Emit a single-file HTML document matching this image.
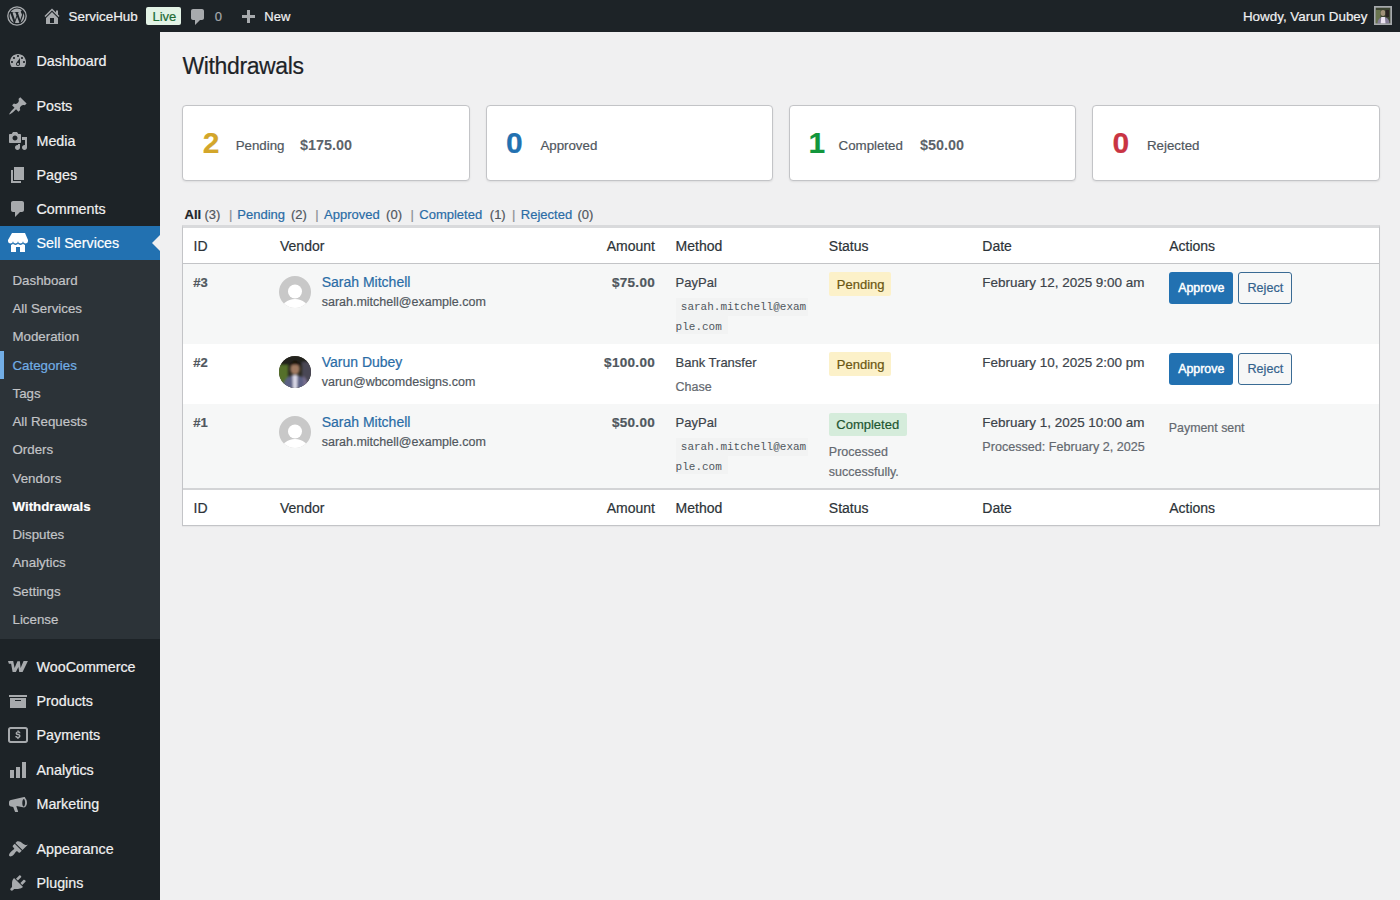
<!DOCTYPE html>
<html><head><meta charset="utf-8"><title>Withdrawals</title>
<style>
html,body{margin:0;padding:0;width:1400px;height:900px;overflow:hidden;background:#f0f0f1;font-family:"Liberation Sans", sans-serif;}
.t{position:absolute;white-space:pre;-webkit-text-stroke:0.2px currentColor;}
.r{position:absolute;box-sizing:border-box;}
svg{position:absolute;overflow:visible;}
</style></head><body>
<div class="r" style="left:0px;top:0px;width:1400px;height:32px;background:#1d2327;"></div><svg style="left:7px;top:6px;width:20px;height:20px" viewBox="0 0 20 20"><circle cx="10" cy="10" r="9.2" fill="none" stroke="#a7aaad" stroke-width="1.3"/><path fill="#a7aaad" d="M2.6 10c0 2.9 1.7 5.5 4.2 6.7L3.3 7C2.9 7.9 2.6 8.9 2.6 10zm12.5-.4c0-.9-.3-1.6-.6-2.1-.4-.6-.7-1.1-.7-1.7 0-.7.5-1.3 1.2-1.3h.1C13.8 3.4 12 2.6 10 2.6c-2.6 0-4.9 1.3-6.2 3.4h.5c.8 0 2-.1 2-.1.4 0 .4.6 0 .6 0 0-.4 0-.8.1l2.5 7.5 1.5-4.6-1.1-2.9c-.4 0-.7-.1-.7-.1-.4 0-.3-.6 0-.6 0 0 1.2.1 1.9.1.8 0 2-.1 2-.1.4 0 .4.6 0 .6 0 0-.4 0-.8.1l2.5 7.4.7-2.3c.3-1 .6-1.7.6-2.3zM10.1 10.7l-2.1 6.1c.6.2 1.3.3 2 .3.8 0 1.6-.1 2.4-.4l-.1-.1-2.2-5.9zm6.1-4c0 .1.1.5.1.8 0 .8-.1 1.6-.5 2.7l-2.2 6.4c2.2-1.3 3.7-3.7 3.7-6.4 0-1.3-.4-2.5-1.1-3.5z"/></svg><svg style="left:41.5px;top:5.5px;width:20px;height:20px" viewBox="0 0 20 20"><path fill="#a7aaad" d="M16 8.5l1.53 1.53-1.06 1.06L10 4.62l-6.47 6.47-1.06-1.06L10 2.5l4 4v-2h2v4zm-6-2.46l6 5.99V18H4v-5.97zM12 17v-5H8v5h4z" /></svg><div class="t" style="left:68.50px;top:9.800px;font-size:13.4px;line-height:13.4px;color:#f0f0f1;">ServiceHub</div><div class="r" style="left:146px;top:7px;width:35px;height:18px;background:#e3f3e6;border-radius:2px;"></div><div class="t" style="left:152.50px;top:10.000px;font-size:13px;line-height:13px;color:#1f6b35;">Live</div><svg style="left:188px;top:7px;width:20px;height:20px" viewBox="0 0 20 20"><path fill="#a7aaad" d="M5 2h9c1.1 0 2 .9 2 2v7c0 1.1-.9 2-2 2h-2l-5 5v-5H5c-1.1 0-2-.9-2-2V4c0-1.1.9-2 2-2z" /></svg><div class="t" style="left:214.80px;top:10.000px;font-size:13px;line-height:13px;color:#a7aaad;">0</div><div class="r" style="left:247px;top:10px;width:3px;height:13px;background:#a7aaad;"></div><div class="r" style="left:242px;top:15px;width:13px;height:3px;background:#a7aaad;"></div><div class="t" style="left:264.30px;top:10.000px;font-size:13px;line-height:13px;color:#f0f0f1;">New</div><div class="t" style="right:32.50px;top:9.800px;font-size:13.4px;line-height:13.4px;color:#f0f0f1;">Howdy, Varun Dubey</div><svg style="left:1374px;top:6px;width:18px;height:19px" viewBox="0 0 18 19"><defs><filter id="ab" x="-20%" y="-20%" width="140%" height="140%"><feGaussianBlur stdDeviation="0.6"/></filter></defs><rect width="18" height="19" fill="#9a9e9c"/><g filter="url(#ab)"><rect x="1.5" y="1.5" width="15" height="16" fill="#3e4433"/><rect x="1.5" y="4" width="5" height="13.5" fill="#6a7450"/><ellipse cx="9" cy="7" rx="2.4" ry="3" fill="#a09078"/><path d="M11.5 4h3.5v7h-3.5z" fill="#2a2420"/><path d="M3.5 17.5c0-4 2.5-6.5 6-6.5s6 2.5 6 6.5z" fill="#857e98"/><path d="M7.3 11h3.6l.6 6.5h-4.8z" fill="#ece4f2"/></g><rect x=".75" y=".75" width="16.5" height="17.5" fill="none" stroke="#a7aaad" stroke-width="1.5"/></svg><div class="r" style="left:0px;top:32px;width:160px;height:868px;background:#1d2327;"></div><div class="r" style="left:0px;top:260px;width:160px;height:379px;background:#2c3338;"></div><div class="r" style="left:0px;top:226px;width:160px;height:34px;background:#2271b1;"></div><svg style="left:152px;top:235px;width:8px;height:16px" viewBox="0 0 8 16"><path d="M8 0v16L0 8z" fill="#f0f0f1"/></svg><svg style="left:8px;top:51px;width:20px;height:20px" viewBox="0 0 20 20"><path fill="#a7aaad" d="M3.76 16h12.48c1.1-1.37 1.76-3.11 1.76-5 0-4.42-3.58-8-8-8s-8 3.58-8 8c0 1.89.66 3.63 1.76 5zM10 4c.55 0 1 .45 1 1s-.45 1-1 1-1-.45-1-1 .45-1 1-1zM6 6c.55 0 1 .45 1 1s-.45 1-1 1-1-.45-1-1 .45-1 1-1zm8 0c.55 0 1 .45 1 1s-.45 1-1 1-1-.45-1-1 .45-1 1-1zm-5.37 5.55L12 7v6c0 1.1-.9 2-2 2s-2-.9-2-2c0-.57.24-1.08.63-1.45zM4 10c.55 0 1 .45 1 1s-.45 1-1 1-1-.45-1-1 .45-1 1-1zm12 0c.55 0 1 .45 1 1s-.45 1-1 1-1-.45-1-1 .45-1 1-1zm-5 3c0-.55-.45-1-1-1s-1 .45-1 1 .45 1 1 1 1-.45 1-1z" /></svg><div class="t" style="left:36.50px;top:53.850px;font-size:14.3px;line-height:14.3px;color:#f0f0f1;">Dashboard</div><svg style="left:8px;top:96px;width:20px;height:20px" viewBox="0 0 20 20"><path fill="#a7aaad" d="M10.44 3.02l1.82-1.82 6.36 6.35-1.83 1.82c-1.05-.68-2.48-.57-3.41.36l-.75.75c-.92.93-1.04 2.35-.35 3.41l-1.83 1.82-2.41-2.41-2.8 2.79c-.42.42-3.38 2.71-3.8 2.29s1.86-3.39 2.28-3.81l2.79-2.79L4.1 9.36l1.83-1.82c1.05.69 2.48.57 3.4-.36l.75-.75c.93-.92 1.05-2.35.36-3.41z" /></svg><div class="t" style="left:36.50px;top:98.850px;font-size:14.3px;line-height:14.3px;color:#f0f0f1;">Posts</div><svg style="left:8px;top:131px;width:20px;height:20px" viewBox="0 0 20 20"><path fill="#a7aaad" d="M13 11V4c0-.55-.45-1-1-1h-1.67L9 1H5L3.67 3H2c-.55 0-1 .45-1 1v7c0 .55.45 1 1 1h10c.55 0 1-.45 1-1zM7 4.5c1.38 0 2.5 1.12 2.5 2.5S8.38 9.5 7 9.5 4.5 8.38 4.5 7 5.62 4.5 7 4.5zM14 6h5v10.5c0 1.38-1.12 2.5-2.5 2.5S14 17.880 14 16.5s1.12-2.5 2.5-2.5c.17 0 .34.02.5.05V9h-3V6zm-4 8.05V13h2v3.5c0 1.38-1.12 2.5-2.5 2.5S7 17.88 7 16.5 8.12 14 9.5 14c.17 0 .34.02.5.05z" /></svg><div class="t" style="left:36.50px;top:133.850px;font-size:14.3px;line-height:14.3px;color:#f0f0f1;">Media</div><svg style="left:8px;top:165px;width:20px;height:20px" viewBox="0 0 20 20"><path fill="#a7aaad" d="M6 15V2h10v13H6zm-1 1h8v2H3V5h2v11z" /></svg><div class="t" style="left:36.50px;top:167.850px;font-size:14.3px;line-height:14.3px;color:#f0f0f1;">Pages</div><svg style="left:8px;top:199px;width:20px;height:20px" viewBox="0 0 20 20"><path fill="#a7aaad" d="M5 2h9c1.1 0 2 .9 2 2v7c0 1.1-.9 2-2 2h-2l-5 5v-5H5c-1.1 0-2-.9-2-2V4c0-1.1.9-2 2-2z" /></svg><div class="t" style="left:36.50px;top:201.850px;font-size:14.3px;line-height:14.3px;color:#f0f0f1;">Comments</div><svg style="left:8px;top:233px;width:20px;height:20px" viewBox="0 0 20 20"><path fill="#fff" d="M1 10c.41.29.96.43 1.5.43.55 0 1.09-.14 1.5-.43.62-.46 1-1.17 1-2 0 .83.37 1.540 1 2 .41.29.96.43 1.5.43.55 0 1.09-.14 1.5-.43.62-.46 1-1.17 1-2 0 .83.37 1.54 1 2 .41.29.96.43 1.51.43.54 0 1.08-.14 1.49-.43.62-.46 1-1.17 1-2 0 .83.37 1.54 1 2 .41.29.96.43 1.5.43.55 0 1.09-.14 1.5-.43.63-.46 1-1.17 1-2V7l-3-7H4L0 7v1c0 .83.37 1.54 1 2zm2 8.99h5v-5h4v5h5v-7c-.37-.05-.72-.22-1-.43-.63-.45-1-.73-1-1.56 0 .83-.38 1.11-1 1.56-.41.3-.95.43-1.49.44-.55 0-1.1-.14-1.51-.44-.63-.45-1-.73-1-1.56 0 .83-.38 1.11-1 1.56-.41.3-.95.43-1.5.44-.54 0-1.09-.14-1.5-.44-.63-.45-1-.73-1-1.57 0 .84-.38 1.12-1 1.57-.29.21-.63.38-1 .44v6.99z" /></svg><div class="t" style="left:36.50px;top:235.850px;font-size:14.3px;line-height:14.3px;color:#fff;">Sell Services</div><svg style="left:8px;top:657px;width:20px;height:20px" viewBox="0 0 20 20"><path fill="#a7aaad" d="M0 4H5.2L6.6 11L9.4 4.3H11.9L12.6 11L15.6 4H19.9L14.6 15H11.2L10.4 10L7.9 15H4.6L3.1 6.8H0.9Z" /></svg><div class="t" style="left:36.50px;top:659.850px;font-size:14.3px;line-height:14.3px;color:#f0f0f1;">WooCommerce</div><svg style="left:8px;top:691px;width:20px;height:20px" viewBox="0 0 20 20"><path fill="#a7aaad" d="M19 4v2H1V4h18zM2 7h16v10H2V7zm11 3V9H7v1h6z" /></svg><div class="t" style="left:36.50px;top:693.850px;font-size:14.3px;line-height:14.3px;color:#f0f0f1;">Products</div><svg style="left:8px;top:725px;width:20px;height:20px" viewBox="0 0 20 20"><path fill="#a7aaad" d="M2.5 2h15c1.4 0 2.5 1.1 2.5 2.5v11c0 1.4-1.1 2.5-2.5 2.5h-15C1.1 18 0 16.9 0 15.5v-11C0 3.1 1.1 2 2.5 2zm.2 2C2.3 4 2 4.3 2 4.7v10.6c0 .4.3.7.7.7h14.6c.4 0 .7-.3.7-.7V4.7c0-.4-.3-.7-.7-.7zM10.6 5.3v1c1 .2 1.8.8 1.9 1.9h-1.6c-.1-.5-.5-.8-1.1-.8-.6 0-.9.3-.9.6 0 .4.4.6 1.2.8 1.4.3 2.4.8 2.4 2.1 0 1.1-.8 1.9-1.9 2.1v1h-1.3v-1c-1.2-.2-2-.9-2.1-2.1h1.6c.1.6.6.9 1.3.9.7 0 1-.3 1-.7 0-.4-.3-.6-1.2-.8-1.3-.3-2.3-.7-2.3-2 0-1 .7-1.7 1.8-1.9v-1z" /></svg><div class="t" style="left:36.50px;top:727.850px;font-size:14.3px;line-height:14.3px;color:#f0f0f1;">Payments</div><svg style="left:8px;top:760px;width:20px;height:20px" viewBox="0 0 20 20"><path fill="#a7aaad" d="M18 18V2h-4v16h4zm-6 0V7H8v11h4zm-6 0v-8H2v8h4z" /></svg><div class="t" style="left:36.50px;top:762.850px;font-size:14.3px;line-height:14.3px;color:#f0f0f1;">Analytics</div><svg style="left:8px;top:794px;width:20px;height:20px" viewBox="0 0 20 20"><path fill="#a7aaad" d="M17.5 4.5c1.2 1.3 1.7 3.3 1.4 5.2-.3 1.9-1.4 3.4-2.8 3.8l-7.6-1.5v.8l1.6 4.7c.1.3-.1.5-.4.5H7.5c-.2 0-.4-.1-.5-.3L5.2 13 3 12.6C1.8 12.4 1 11.3 1 10.2V8.5c0-1.1.8-2.2 2-2.4L16.1 3c.5-.1 1 .3 1.4 1.5zM15.7 5c-.8.2-1.4 2-1.4 4s.6 3.7 1.4 3.5c.8-.2 1.4-1.9 1.4-3.8 0-2-.6-3.7-1.4-3.7z" /></svg><div class="t" style="left:36.50px;top:796.850px;font-size:14.3px;line-height:14.3px;color:#f0f0f1;">Marketing</div><svg style="left:8px;top:839px;width:20px;height:20px" viewBox="0 0 20 20"><path fill="#a7aaad" d="M14.48 11.06L7.41 3.99l1.5-1.5c.5-.56 2.3-.47 3.51.32 1.21.8 1.430 1.28 2.91 2.1 1.18.64 2.45 1.26 4.45.85zm-.71.71L6.7 4.7 4.93 6.47c-.39.39-.39 1.02 0 1.41l1.06 1.06c.39.39.39 1.03 0 1.42-.6.6-1.43 1.11-2.21 1.69-.35.26-.7.53-1.010.84C1.43 14.23.4 16.08 1.4 17.07c.99 1 2.84-.03 4.18-1.36.31-.31.58-.66.85-1.02.57-.78 1.08-1.61 1.69-2.21.39-.39 1.02-.39 1.41 0l1.06 1.06c.39.39 1.02.39 1.41 0z" /></svg><div class="t" style="left:36.50px;top:841.850px;font-size:14.3px;line-height:14.3px;color:#f0f0f1;">Appearance</div><svg style="left:8px;top:873px;width:20px;height:20px" viewBox="0 0 20 20"><path fill="#a7aaad" d="M13.11 4.36L9.87 7.6 8 5.73l3.24-3.24c.35-.34 1.05-.2 1.56.32.52.51.66 1.21.31 1.55zm-8 1.77l.91-1.12 9.01 9.01-1.19.84c-.71.71-2.63 1.16-3.82 1.16H6.14L4.9 17.26c-.59.59-1.54.59-2.12 0-.59-.58-.59-1.53 0-2.12l1.24-1.24v-3.88c0-1.13.4-3.19 1.09-3.89zm7.26 3.97l3.24-3.24c.34-.35 1.04-.21 1.55.31.52.51.66 1.21.31 1.550l-3.24 3.25z" /></svg><div class="t" style="left:36.50px;top:875.850px;font-size:14.3px;line-height:14.3px;color:#f0f0f1;">Plugins</div><div class="t" style="left:12.50px;top:273.850px;font-size:13.3px;line-height:13.3px;color:#c3c4c7;">Dashboard</div><div class="t" style="left:12.50px;top:301.850px;font-size:13.3px;line-height:13.3px;color:#c3c4c7;">All Services</div><div class="t" style="left:12.50px;top:329.850px;font-size:13.3px;line-height:13.3px;color:#c3c4c7;">Moderation</div><div class="t" style="left:12.50px;top:358.850px;font-size:13.3px;line-height:13.3px;color:#72aee6;">Categories</div><div class="t" style="left:12.50px;top:386.850px;font-size:13.3px;line-height:13.3px;color:#c3c4c7;">Tags</div><div class="t" style="left:12.50px;top:414.850px;font-size:13.3px;line-height:13.3px;color:#c3c4c7;">All Requests</div><div class="t" style="left:12.50px;top:442.850px;font-size:13.3px;line-height:13.3px;color:#c3c4c7;">Orders</div><div class="t" style="left:12.50px;top:471.850px;font-size:13.3px;line-height:13.3px;color:#c3c4c7;">Vendors</div><div class="t" style="left:12.50px;top:499.850px;font-size:13.3px;line-height:13.3px;color:#fff;font-weight:700;">Withdrawals</div><div class="t" style="left:12.50px;top:527.850px;font-size:13.3px;line-height:13.3px;color:#c3c4c7;">Disputes</div><div class="t" style="left:12.50px;top:555.850px;font-size:13.3px;line-height:13.3px;color:#c3c4c7;">Analytics</div><div class="t" style="left:12.50px;top:584.850px;font-size:13.3px;line-height:13.3px;color:#c3c4c7;">Settings</div><div class="t" style="left:12.50px;top:612.850px;font-size:13.3px;line-height:13.3px;color:#c3c4c7;">License</div><div class="r" style="left:0px;top:351px;width:4px;height:28px;background:#72aee6;"></div><div class="t" style="left:182.50px;top:54.500px;font-size:23px;line-height:23px;color:#1d2327;letter-spacing:-0.38px;">Withdrawals</div><div class="r" style="left:182px;top:105px;width:288px;height:76px;background:#fff;border:1px solid #c3c4c7;border-radius:4px;box-shadow:0 1px 2px rgba(0,0,0,.08);"></div><div class="r" style="left:486px;top:105px;width:287px;height:76px;background:#fff;border:1px solid #c3c4c7;border-radius:4px;box-shadow:0 1px 2px rgba(0,0,0,.08);"></div><div class="r" style="left:789px;top:105px;width:287px;height:76px;background:#fff;border:1px solid #c3c4c7;border-radius:4px;box-shadow:0 1px 2px rgba(0,0,0,.08);"></div><div class="r" style="left:1092px;top:105px;width:288px;height:76px;background:#fff;border:1px solid #c3c4c7;border-radius:4px;box-shadow:0 1px 2px rgba(0,0,0,.08);"></div><div class="t" style="left:202.80px;top:127.500px;font-size:30px;line-height:30px;color:#d3a62a;font-weight:700;">2</div><div class="t" style="left:235.70px;top:138.850px;font-size:13.3px;line-height:13.3px;color:#50575e;">Pending</div><div class="t" style="left:300.00px;top:137.800px;font-size:14.4px;line-height:14.4px;color:#5c636a;font-weight:600;-webkit-text-stroke:0;">$175.00</div><div class="t" style="left:506.00px;top:127.500px;font-size:30px;line-height:30px;color:#2271b1;font-weight:700;">0</div><div class="t" style="left:540.40px;top:138.850px;font-size:13.3px;line-height:13.3px;color:#50575e;">Approved</div><div class="t" style="left:808.50px;top:127.500px;font-size:30px;line-height:30px;color:#12963c;font-weight:700;">1</div><div class="t" style="left:838.60px;top:138.850px;font-size:13.3px;line-height:13.3px;color:#50575e;">Completed</div><div class="t" style="left:920.00px;top:137.800px;font-size:14.4px;line-height:14.4px;color:#5c636a;font-weight:600;-webkit-text-stroke:0;">$50.00</div><div class="t" style="left:1112.50px;top:127.500px;font-size:30px;line-height:30px;color:#c93443;font-weight:700;">0</div><div class="t" style="left:1147.00px;top:138.850px;font-size:13.3px;line-height:13.3px;color:#50575e;">Rejected</div><div class="t" style="left:184.60px;top:208.000px;font-size:13px;line-height:13px;color:#1d2327;font-weight:700;">All</div><div class="t" style="left:204.50px;top:208.000px;font-size:13px;line-height:13px;color:#50575e;">(3)</div><div class="t" style="left:228.90px;top:208.000px;font-size:13px;line-height:13px;color:#8c8f94;">|</div><div class="t" style="left:237.30px;top:208.000px;font-size:13px;line-height:13px;color:#2a6ca6;">Pending</div><div class="t" style="left:290.90px;top:208.000px;font-size:13px;line-height:13px;color:#50575e;">(2)</div><div class="t" style="left:315.30px;top:208.000px;font-size:13px;line-height:13px;color:#8c8f94;">|</div><div class="t" style="left:324.10px;top:208.000px;font-size:13px;line-height:13px;color:#2a6ca6;">Approved</div><div class="t" style="left:386.10px;top:208.000px;font-size:13px;line-height:13px;color:#50575e;">(0)</div><div class="t" style="left:410.50px;top:208.000px;font-size:13px;line-height:13px;color:#8c8f94;">|</div><div class="t" style="left:419.30px;top:208.000px;font-size:13px;line-height:13px;color:#2a6ca6;">Completed</div><div class="t" style="left:489.80px;top:208.000px;font-size:13px;line-height:13px;color:#50575e;">(1)</div><div class="t" style="left:511.90px;top:208.000px;font-size:13px;line-height:13px;color:#8c8f94;">|</div><div class="t" style="left:520.80px;top:208.000px;font-size:13px;line-height:13px;color:#2a6ca6;">Rejected</div><div class="t" style="left:577.40px;top:208.000px;font-size:13px;line-height:13px;color:#50575e;">(0)</div><div class="r" style="left:182px;top:225px;width:1198px;height:301px;background:#fff;border:1px solid #c3c4c7;border-top:3px solid #d9dadc;box-shadow:0 1px 1px rgba(0,0,0,.04);"></div><div class="r" style="left:183px;top:263px;width:1196px;height:1px;background:#c3c4c7;"></div><div class="r" style="left:183px;top:264px;width:1196px;height:80px;background:#f6f7f7;"></div><div class="r" style="left:183px;top:404px;width:1196px;height:84px;background:#f6f7f7;"></div><div class="r" style="left:183px;top:488px;width:1196px;height:2px;background:#d3d4d6;"></div><div class="t" style="left:193.60px;top:239.000px;font-size:14px;line-height:14px;color:#2c3338;">ID</div><div class="t" style="left:280.00px;top:239.000px;font-size:14px;line-height:14px;color:#2c3338;">Vendor</div><div class="t" style="right:745.00px;top:239.000px;font-size:14px;line-height:14px;color:#2c3338;">Amount</div><div class="t" style="left:675.60px;top:239.000px;font-size:14px;line-height:14px;color:#2c3338;">Method</div><div class="t" style="left:828.80px;top:239.000px;font-size:14px;line-height:14px;color:#2c3338;">Status</div><div class="t" style="left:982.30px;top:239.000px;font-size:14px;line-height:14px;color:#2c3338;">Date</div><div class="t" style="left:1169.20px;top:239.000px;font-size:14px;line-height:14px;color:#2c3338;">Actions</div><div class="t" style="left:193.60px;top:501.000px;font-size:14px;line-height:14px;color:#2c3338;">ID</div><div class="t" style="left:280.00px;top:501.000px;font-size:14px;line-height:14px;color:#2c3338;">Vendor</div><div class="t" style="right:745.00px;top:501.000px;font-size:14px;line-height:14px;color:#2c3338;">Amount</div><div class="t" style="left:675.60px;top:501.000px;font-size:14px;line-height:14px;color:#2c3338;">Method</div><div class="t" style="left:828.80px;top:501.000px;font-size:14px;line-height:14px;color:#2c3338;">Status</div><div class="t" style="left:982.30px;top:501.000px;font-size:14px;line-height:14px;color:#2c3338;">Date</div><div class="t" style="left:1169.20px;top:501.000px;font-size:14px;line-height:14px;color:#2c3338;">Actions</div><div class="t" style="left:193.30px;top:276.000px;font-size:13px;line-height:13px;color:#50575e;font-weight:700;">#3</div><svg style="left:279px;top:276px;width:32px;height:32px" viewBox="0 0 32 32"><defs><clipPath id="c276"><circle cx="16" cy="16" r="16"/></clipPath></defs><g clip-path="url(#c276)"><rect width="32" height="32" fill="#c8c8c8"/><circle cx="16" cy="15.5" r="7" fill="#fff"/><ellipse cx="16" cy="35" rx="14" ry="12" fill="#fff"/></g></svg><div class="t" style="left:321.70px;top:275.000px;font-size:14px;line-height:14px;color:#2a6ca6;">Sarah Mitchell</div><div class="t" style="left:321.70px;top:295.750px;font-size:12.5px;line-height:12.5px;color:#50575e;">sarah.mitchell@example.com</div><div class="t" style="right:745.00px;top:275.750px;font-size:13.5px;line-height:13.5px;color:#50575e;font-weight:700;letter-spacing:0.3px;">$75.00</div><div class="t" style="left:675.60px;top:276.000px;font-size:13px;line-height:13px;color:#3c434a;">PayPal</div><div class="r" style="left:676px;top:298px;width:132px;height:18px;background:rgba(0,0,0,.015);"></div><div class="t" style="left:680.80px;top:301.500px;font-size:11px;line-height:11px;color:#50575e;font-family:'Liberation Mono', monospace;-webkit-text-stroke:0;">sarah.mitchell@exam</div><div class="r" style="left:675.6px;top:316px;width:52px;height:18px;background:rgba(0,0,0,.015);"></div><div class="t" style="left:675.60px;top:321.500px;font-size:11px;line-height:11px;color:#50575e;font-family:'Liberation Mono', monospace;-webkit-text-stroke:0;">ple.com</div><div class="r" style="left:828.5px;top:272px;width:62px;height:24px;background:#fcf1c9;border-radius:2px;"></div><div class="t" style="left:836.80px;top:278.000px;font-size:13px;line-height:13px;color:#6b5712;">Pending</div><div class="t" style="left:982.30px;top:275.775px;font-size:13.45px;line-height:13.45px;color:#3c434a;">February 12, 2025 9:00 am</div><div class="r" style="left:1169px;top:272px;width:64px;height:32px;background:#2271b1;border-radius:3px;"></div><div class="t" style="left:1178.20px;top:281.800px;font-size:12.4px;line-height:12.4px;color:#fff;-webkit-text-stroke:0.45px #fff;">Approve</div><div class="r" style="left:1238px;top:272px;width:54px;height:32px;background:#f6f7f7;border:1px solid #3a6b94;border-radius:3px;"></div><div class="t" style="left:1247.50px;top:281.700px;font-size:12.6px;line-height:12.6px;color:#34628c;">Reject</div><div class="t" style="left:193.30px;top:356.000px;font-size:13px;line-height:13px;color:#50575e;font-weight:700;">#2</div><svg style="left:279px;top:356px;width:32px;height:32px" viewBox="0 0 32 32"><defs><clipPath id="p356"><circle cx="16" cy="16" r="16"/></clipPath><filter id="b356" x="-20%" y="-20%" width="140%" height="140%"><feGaussianBlur stdDeviation="0.9"/></filter></defs><g clip-path="url(#p356)"><rect width="32" height="32" fill="#2c2a20"/><g filter="url(#b356)"><rect x="-2" y="8" width="11" height="26" fill="#55702c"/><rect x="0" y="0" width="32" height="9" fill="#23241c"/><rect x="23" y="6" width="11" height="26" fill="#4a4654"/><ellipse cx="16" cy="13" rx="4.6" ry="5.6" fill="#a07a62"/><path d="M11 11c0-4 2.2-6.5 5-6.5s5 2.5 5 6.5c-1.2-2-2.8-2.6-5-2.6s-3.8.6-5 2.6z" fill="#1c1410"/><path d="M4 34c0-10 5-15 12-15s12 5 12 15z" fill="#5b6184"/><path d="M13.5 19h5l-.5 15h-4z" fill="#d9d8e6"/><path d="M24 20c3 2 5 6 5 14h-4z" fill="#7a7090"/></g></g></svg><div class="t" style="left:321.70px;top:355.000px;font-size:14px;line-height:14px;color:#2a6ca6;">Varun Dubey</div><div class="t" style="left:321.70px;top:375.750px;font-size:12.5px;line-height:12.5px;color:#50575e;">varun@wbcomdesigns.com</div><div class="t" style="right:745.00px;top:355.750px;font-size:13.5px;line-height:13.5px;color:#50575e;font-weight:700;letter-spacing:0.3px;">$100.00</div><div class="t" style="left:675.60px;top:356.000px;font-size:13px;line-height:13px;color:#3c434a;">Bank Transfer</div><div class="t" style="left:675.60px;top:380.750px;font-size:12.5px;line-height:12.5px;color:#646970;">Chase</div><div class="r" style="left:828.5px;top:352px;width:62px;height:24px;background:#fcf1c9;border-radius:2px;"></div><div class="t" style="left:836.80px;top:358.000px;font-size:13px;line-height:13px;color:#6b5712;">Pending</div><div class="t" style="left:982.30px;top:355.775px;font-size:13.45px;line-height:13.45px;color:#3c434a;">February 10, 2025 2:00 pm</div><div class="r" style="left:1169px;top:352.5px;width:64px;height:32px;background:#2271b1;border-radius:3px;"></div><div class="t" style="left:1178.20px;top:362.800px;font-size:12.4px;line-height:12.4px;color:#fff;-webkit-text-stroke:0.45px #fff;">Approve</div><div class="r" style="left:1238px;top:352.5px;width:54px;height:32px;background:#f6f7f7;border:1px solid #3a6b94;border-radius:3px;"></div><div class="t" style="left:1247.50px;top:362.700px;font-size:12.6px;line-height:12.6px;color:#34628c;">Reject</div><div class="t" style="left:193.30px;top:416.000px;font-size:13px;line-height:13px;color:#50575e;font-weight:700;">#1</div><svg style="left:279px;top:416px;width:32px;height:32px" viewBox="0 0 32 32"><defs><clipPath id="c416"><circle cx="16" cy="16" r="16"/></clipPath></defs><g clip-path="url(#c416)"><rect width="32" height="32" fill="#c8c8c8"/><circle cx="16" cy="15.5" r="7" fill="#fff"/><ellipse cx="16" cy="35" rx="14" ry="12" fill="#fff"/></g></svg><div class="t" style="left:321.70px;top:415.000px;font-size:14px;line-height:14px;color:#2a6ca6;">Sarah Mitchell</div><div class="t" style="left:321.70px;top:435.750px;font-size:12.5px;line-height:12.5px;color:#50575e;">sarah.mitchell@example.com</div><div class="t" style="right:745.00px;top:415.750px;font-size:13.5px;line-height:13.5px;color:#50575e;font-weight:700;letter-spacing:0.3px;">$50.00</div><div class="t" style="left:675.60px;top:416.000px;font-size:13px;line-height:13px;color:#3c434a;">PayPal</div><div class="r" style="left:676px;top:438px;width:132px;height:18px;background:rgba(0,0,0,.015);"></div><div class="t" style="left:680.80px;top:441.500px;font-size:11px;line-height:11px;color:#50575e;font-family:'Liberation Mono', monospace;-webkit-text-stroke:0;">sarah.mitchell@exam</div><div class="r" style="left:675.6px;top:456px;width:52px;height:18px;background:rgba(0,0,0,.015);"></div><div class="t" style="left:675.60px;top:461.500px;font-size:11px;line-height:11px;color:#50575e;font-family:'Liberation Mono', monospace;-webkit-text-stroke:0;">ple.com</div><div class="r" style="left:829px;top:413px;width:78px;height:23px;background:#d5ecdb;border-radius:2px;"></div><div class="t" style="left:836.30px;top:418.000px;font-size:13px;line-height:13px;color:#1e5631;">Completed</div><div class="t" style="left:828.80px;top:445.750px;font-size:12.5px;line-height:12.5px;color:#646970;">Processed</div><div class="t" style="left:828.80px;top:465.750px;font-size:12.5px;line-height:12.5px;color:#646970;">successfully.</div><div class="t" style="left:982.30px;top:415.775px;font-size:13.45px;line-height:13.45px;color:#3c434a;">February 1, 2025 10:00 am</div><div class="t" style="left:982.30px;top:440.700px;font-size:12.6px;line-height:12.6px;color:#646970;">Processed: February 2, 2025</div><div class="t" style="left:1168.80px;top:421.800px;font-size:12.4px;line-height:12.4px;color:#646970;">Payment sent</div>
</body></html>
